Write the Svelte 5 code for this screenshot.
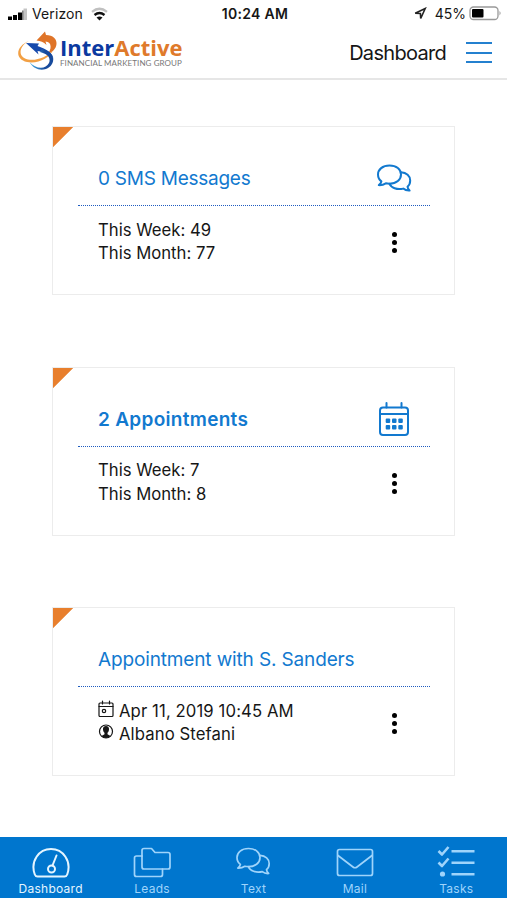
<script lang="ts">
	const cards = [
		{ title: '0 SMS Messages', kind: 'sms', icon: 'chat', rows: [{ text: 'This Week: 49', icon: '' }, { text: 'This Month: 77', icon: '' }] },
		{ title: '2 Appointments', kind: 'count', icon: 'calendar', rows: [{ text: 'This Week: 7', icon: '' }, { text: 'This Month: 8', icon: '' }] },
		{ title: 'Appointment with S. Sanders', kind: 'detail', icon: '', rows: [{ text: 'Apr 11, 2019 10:45 AM', icon: 'date' }, { text: 'Albano Stefani', icon: 'person' }] }
	];
	const tabs = [
		{ label: 'Dashboard', icon: 'gauge' },
		{ label: 'Leads', icon: 'folders' },
		{ label: 'Text', icon: 'chat' },
		{ label: 'Mail', icon: 'mail' },
		{ label: 'Tasks', icon: 'tasks' }
	];
	let active = $state('Dashboard');
</script>

{#snippet icon(name: string)}
	{#if name === 'chat'}
		<svg class="icon" viewBox="0 0 38 34">
			<path d="M14.5 3.5C7.6 3.5 3 7.5 3 12.5c0 3.1 1.4 5.4 3.4 6.9-.2 1.5-1.2 2.7-2.6 3.7 3 .2 5.2-.6 7-1.8 1.2.3 2.4.4 3.7.4 7 0 11.5-4.1 11.5-9.2s-4.6-9-11.5-9z" />
			<path d="M26 10.3c5.4.4 9.2 3.7 9.2 8.200 0 2.900-1 4.800-2.700 6.200.2 1.600 1 2.900 2.100 3.800-2.700.2-4.700-.5-6.300-1.900-6.200 1.500-12.300-.7-13.800-4.900" />
		</svg>
	{:else if name === 'calendar'}
		<svg class="icon" viewBox="0 0 38 38">
			<rect x="5" y="6.5" width="28" height="27.500" rx="3" />
			<path d="M5 13h28M11.500 2v4.500M26.500 2v4.500" />
			{#each [10.7, 17, 23.3] as x}
				<rect class="solid" {x} y="17.5" width="4.5" height="4.5" rx="1" />
				<rect class="solid" {x} y="24" width="4.5" height="4.5" rx="1" />
			{/each}
		</svg>
	{:else if name === 'date'}
		<svg class="icon" viewBox="0 0 16 18">
			<rect x="1" y="3" width="14" height="13.5" rx="1" />
			<path d="M1 6.5h14M4.500 1v3M11.500 1v3" />
			<circle cx="6" cy="11" r="1.7" />
		</svg>
	{:else if name === 'person'}
		<svg class="icon" viewBox="0 0 16 18">
			<circle cx="8" cy="8.5" r="6.5" />
			<path class="solid" d="M8 3C5.900 3 4.800 4.300 5 6.500c.1 1.400.7 2.600 1.500 3.200v1.600L3.500 13c2.300 2.500 6.700 2.500 9 0l-3-1.700V9.700c.8-.6 1.400-1.800 1.500-3.200C11.200 4.300 10.100 3 8 3z" />
		</svg>
	{:else if name === 'gauge'}
		<svg class="icon" viewBox="0 0 38 34">
			<path d="M5.500 31.500Q3.500 31.500 2.800 29.500C-2 16 7 4 19 4s21 12 16.200 25.500q-.7 2-2.700 2z" />
			<path d="M20.500 20.500l4-10" />
			<circle cx="19.5" cy="24" r="3.5" />
		</svg>
	{:else if name === 'folders'}
		<svg class="icon" viewBox="0 0 38 34">
			<path d="M11 3.500h7.500l3.500 4h13q2 0 2 2V22q0 2-2 2H11q-2 0-2-2V5.500q0-2 2-2z" />
			<path d="M9 11H3.500q-2 0-2 2v16.500q0 2 2 2h24q2 0 2-2V24" />
		</svg>
	{:else if name === 'mail'}
		<svg class="icon" viewBox="0 0 38 34">
			<rect x="1.5" y="4.5" width="35" height="26" rx="2" />
			<path d="M2 10.500L17 22q2 1.500 4 0l15-11.500" />
		</svg>
	{:else if name === 'tasks'}
		<svg class="icon tasks" viewBox="0 0 38 34">
			<path d="M1.500 6l3.500 3.500L11.500 2M1.500 17.500L5 21l6.500-7.500M14.500 6.300h23M14.500 17.800h23M14.500 29.300h23" />
			<circle class="solid" cx="5.5" cy="29" r="2.6" />
		</svg>
	{/if}
{/snippet}

<div class="app">
	<div class="status">
		<div class="carrier">
			<svg width="21" height="14" viewBox="0 0 21 14">
				<path d="M0 9.500h4V13H0zM5 8h4v5H5zM10 5.500h4V13h-4zM14.500 3.500h1V13h-1z" />
				<path fill="#c4c4c4" d="M15.500 1.500H19V13h-3.500z" />
			</svg>
			<span>Verizon</span>
			<svg class="wifi" width="17" height="14" viewBox="0 0 17 14" fill="none" stroke="#111" stroke-width="2.3">
				<path stroke="#c0c0c0" d="M1 4.800q7.500-6 15 0" />
				<path d="M3.500 8q5-4 10 0" />
				<path fill="#111" stroke="none" d="M5.500 10.400q3-2 6 0l-3 3z" />
			</svg>
		</div>
		<span class="clock">10:24 AM</span>
		<div class="power">
			<svg width="13" height="13" viewBox="0 0 13 13" fill="none" stroke="#222" stroke-width="1.6">
				<path d="M1.200 6.300l10-4.800-4.500 10-.3-5z" />
			</svg>
			<span>45%</span>
			<svg width="33" height="15" viewBox="0 0 33 15">
				<rect x="1" y="1" width="28" height="12.5" rx="3.5" fill="none" stroke="#999" stroke-width="1.3" />
				<rect x="3" y="3" width="11.5" height="8.5" rx="1" />
				<path fill="#999" d="M30.500 5q2.200 2.200 0 4.400z" />
			</svg>
		</div>
	</div>

	<header>
		<div class="logo">
			<svg width="42" height="40" viewBox="0 0 42 40">
				<defs>
					<linearGradient id="swoosh" x1="0" x2="1">
						<stop offset="0" stop-color="#49b4e8" />
						<stop offset=".65" stop-color="#174a9c" />
					</linearGradient>
				</defs>
				<path fill="#f2a044" d="M11 10C-2 15-4 28 9 31c11 2 23-4 26-12-6 7-16 11-25 9.500C-1 26 1 15 11 10z" />
				<path fill="#df7428" d="M18.500 9.500L27 .5l1 3.500c7 0 11 4 10.500 9-.5 5-4 8-9 10 4-4 5-12-2-12.500l1 3.500c-3-3-6-4-10-4.500z" />
				<path fill="#174aac" d="M8 12l13 .5-1.500 2.500c9 3 16 7 16 14 0-5-7-8-16-9l1 3.500z" />
				<path fill="url(#swoosh)" d="M24 18c9 2 13 8 10.500 14-4 9-18 9-23-1 6 7 16 8 19.500 1 2-5-1-9-9-11z" />
			</svg>
			<div class="brand">
				<div class="name">Inter<b>Active</b></div>
				<div class="sub">FINANCIAL MARKETING GROUP</div>
			</div>
		</div>
		<h1>Dashboard</h1>
		<button class="menu" aria-label="Menu"><i></i><i></i><i></i></button>
	</header>

	<main>
		{#each cards as card}
			<section class="card {card.kind}">
				<div class="head">
					<h2>{card.title}</h2>
					{@render icon(card.icon)}
				</div>
				<div class="body">
					<div>
						{#each card.rows as row}
							<div class="row">{@render icon(row.icon)}<span>{row.text}</span></div>
						{/each}
					</div>
					<button class="more" aria-label="More"><i></i><i></i><i></i></button>
				</div>
			</section>
		{/each}
	</main>

	<nav>
		{#each tabs as tab}
			<button class:active={active === tab.label} onclick={() => (active = tab.label)}>
				{@render icon(tab.icon)}
				<span>{tab.label}</span>
			</button>
		{/each}
	</nav>
</div>

<style>
	:global(body) { margin: 0; background: #fff; }
	.app { height: 900px; display: flex; flex-direction: column; overflow: hidden; font-family: Inter, Roboto, sans-serif; color: #161616; }
	button { border: 0; background: none; padding: 0; font: inherit; cursor: pointer; }
	h1, h2 { margin: 0; font-weight: 400; }
	.status { height: 27px; display: grid; grid-template-columns: 1fr auto 1fr; align-items: center; padding: 0 5px 0 8px; box-sizing: border-box; font-size: 14px; flex: none; }
	.carrier, .power { display: flex; align-items: center; }
	.carrier span { margin-left: 3px; letter-spacing: 0.1px; }
	.wifi { margin-left: 8px; }
	.clock { font-weight: 600; letter-spacing: 0.3px; }
	.power { justify-content: flex-end; }
	.power span { margin: 0 3px 0 8px; }
	header { height: 53px; flex: none; display: flex; align-items: center; box-sizing: border-box; border-bottom: 2px solid #e6e6e6; padding: 0 15px 0 18px; }
	.logo { display: flex; align-items: center; flex: 1; }
	.logo svg { margin-top: -3px; }
	.brand { width: 124px; margin-top: -1px; white-space: nowrap; }
	.name { font: 700 22px/22px "Open Sans", sans-serif; color: #0b39a0; }
	.name b { font-weight: 700; color: #df7a2b; }
	.sub { margin-top: 1px; font: 8px/9px Lato, sans-serif; letter-spacing: 0.08px; color: #777; }
	h1 { font-size: 20px; letter-spacing: -0.7px; }
	.menu { width: 26px; height: 21px; margin-left: 20px; display: flex; flex-direction: column; justify-content: space-between; }
	.menu i { height: 2px; width: 26px; background: #2480cf; }
	main { flex: 1; padding: 46px 52px 0; display: flex; flex-direction: column; gap: 71.5px; }
	.card { height: 169px; box-sizing: border-box; border: 1px solid #ececec; padding: 0 24px 0 25px; background: linear-gradient(135deg, #e87f2d 14px, #fff 14.5px); }
	.head { height: 79px; box-sizing: border-box; border-bottom: 1px dotted #1f5cc0; display: flex; align-items: center; justify-content: space-between; padding: 26px 17px 0 20px; color: #1279cf; }
	h2 { font-size: 19px; line-height: 24px; letter-spacing: -0.25px; }
	.count h2 { font-weight: 600; letter-spacing: 0.3px; }
	.detail h2 { letter-spacing: -0.14px; }
	.icon { display: block; fill: none; stroke: currentColor; stroke-width: 2; stroke-linecap: round; stroke-linejoin: round; }
	.solid { fill: currentColor; stroke: none; }
	.head .icon { width: 38px; }
	.body { display: flex; justify-content: space-between; padding: 12px 33.5px 0 20px; }
	.row { display: flex; align-items: center; height: 23.5px; font-size: 16.7px; white-space: nowrap; }
	.detail .row { letter-spacing: 0.1px; }
	.row .icon { width: 16px; height: 18px; margin: -4px 5px 0 0; stroke-width: 1.2; }
	.more { width: 5px; height: 21px; margin-top: 14px; display: flex; flex-direction: column; justify-content: space-between; }
	.more i { width: 5px; height: 5px; border-radius: 50%; background: #000; }
	nav { height: 61px; margin-bottom: 2px; flex: none; display: grid; grid-template-columns: repeat(5, 1fr); background: #0076ce; }
	nav button { display: flex; flex-direction: column; align-items: center; padding-top: 8px; color: #9fd4fb; font-size: 12px; line-height: 15px; letter-spacing: 0.25px; }
	nav .icon { width: 38px; height: 34px; margin-bottom: 2px; stroke-width: 1.7; }
	nav .tasks { stroke-width: 2.6; stroke-linecap: butt; }
	nav .active { color: #e4f5ff; }
	nav .active .icon { stroke-width: 2; }
</style>
